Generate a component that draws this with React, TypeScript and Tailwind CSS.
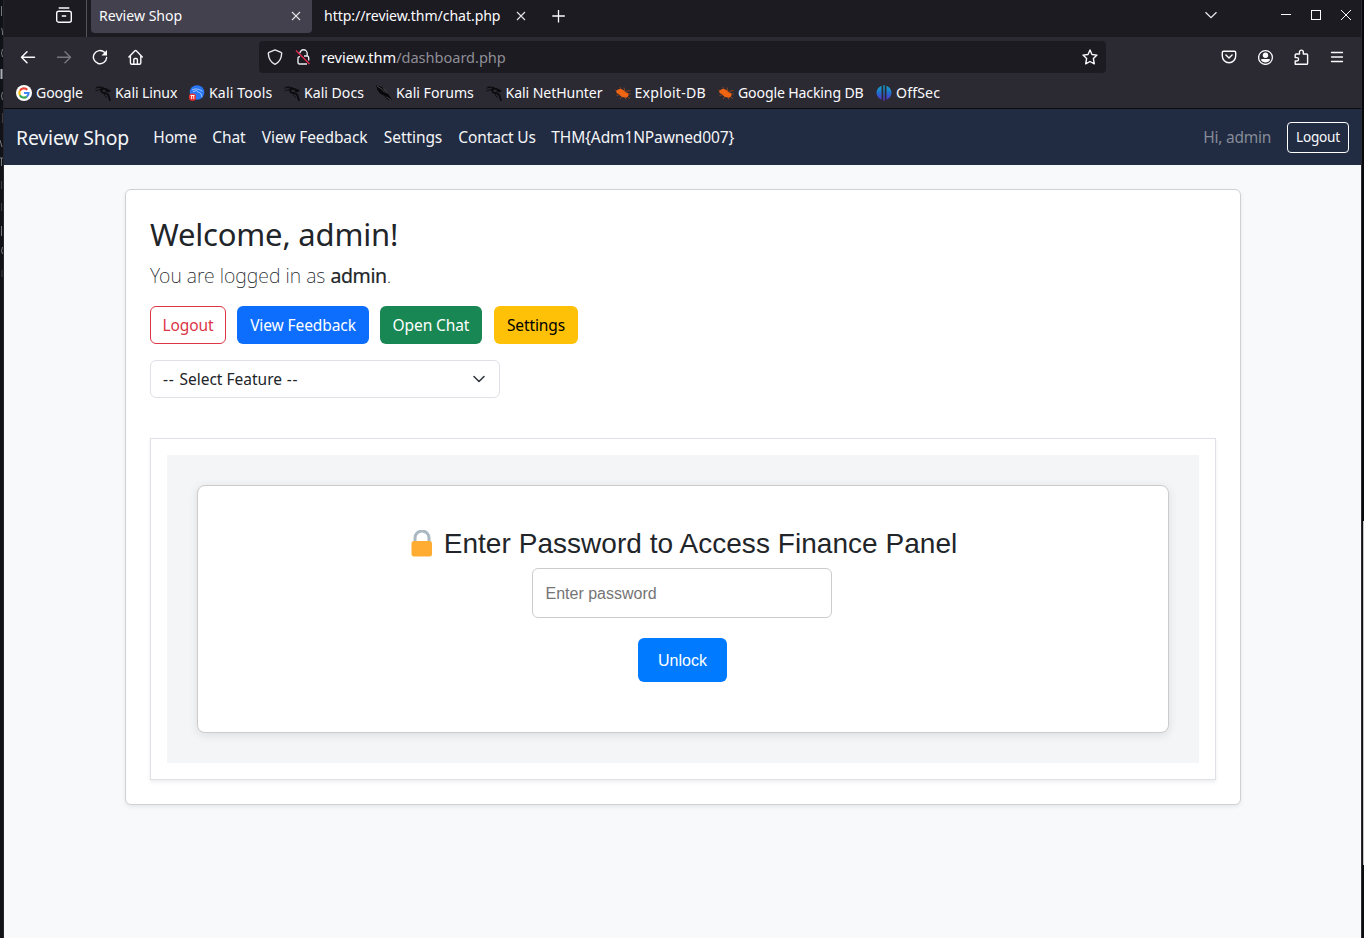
import type { ReactNode } from "react";

function KaliDragon({ color = "#0b0b0e" }: { color?: string }) {
  return (
    <svg className="h-4 w-4 shrink-0" viewBox="0 0 16 16" fill="none" stroke={color} strokeLinecap="round" strokeLinejoin="round">
      <path d="M.6 3.200 4.800 1.800l3.500.8M1 5.800l4-1.300 3.200.2M2 2l5.600 1.300 3.300.8" strokeWidth=".9" />
      <path d="M7.500 3.500C5.600 4.700 5.600 7.100 8.200 7.800c2.200.500 4.300.700 5.200 2.500.700 1.300.600 3.100 1.600 4.900" strokeWidth="1.800" />
      <path d="M8 3.500c2 .2 3.500.500 4.700 1.400l2 .7-1 .800-2.700-.400" strokeWidth="1.500" />
      <path d="M9.500 8.500c-.700 1.800.500 3.300 2.300 3.900" strokeWidth=".9" />
    </svg>
  );
}

function ForumsIcon() {
  return (
    <svg className="h-4 w-4 shrink-0" viewBox="0 0 16 16">
      <path d="M0 .2 6 2l4 4.200 2.400 3L16 15.300l-4.600-.6-3-4-4.400-2.200L1.500 5z" fill="#08080a" />
      <path d="m1 1 5 3.200 2.700 3.200M7.500 3.500l3.700 4.800M10.500 12l4.500 3.100" fill="none" stroke="#77777d" strokeWidth=".6" />
    </svg>
  );
}

function GoogleIcon() {
  return (
    <svg className="h-4 w-4 shrink-0" viewBox="0 0 16 16" fill="none" strokeWidth="2.100">
      <circle cx="8" cy="8" r="8" fill="#fff" />
      <path d="M11.300 4.800A4.600 4.600 0 0 0 3.900 5.800" stroke="#ea4335" />
      <path d="M3.900 5.800a4.700 4.700 0 0 0 0 4.400" stroke="#fbbc05" />
      <path d="M3.900 10.200a4.600 4.600 0 0 0 7 1.400" stroke="#34a853" />
      <path d="M8 8h4.600a4.600 4.600 0 0 1-1.700 3.600" stroke="#4285f4" />
    </svg>
  );
}

function ToolsIcon() {
  return (
    <svg className="h-4 w-4 shrink-0" viewBox="0 0 16 16">
      <circle cx="8" cy="7.500" r="7.300" fill="#2777f6" />
      <path d="M3 4.800 7 3.800l3.500.9 3 1.500M4 6.700l3.600-1.200c.2 1.900 3.300 1.600 4.400 3.200.6.900.5 2.200 1 3.500" fill="none" stroke="#b9d5ff" strokeWidth=".8" />
      <rect x="0" y="8.500" width="7" height="7.300" rx="3" fill="#e5322e" />
      <path d="M1.500 10.500h4M2.600 10.500v3.500M4.700 10.500v3.500" stroke="#fff" strokeWidth=".9" />
    </svg>
  );
}

function ExploitIcon() {
  return (
    <svg className="h-4 w-4 shrink-0" viewBox="0 0 16 16">
      <path d="m.3 5.200 3 .8M1.500 10.500l3.500-1M4.800 2l1.500 3M5 14l2.300-2.500M9 2.500l.8 3.500M10.500 6.500l5-1M11 10.500l4 3.200M11.500 8.700l4.300.3M9.500 11l1.500 3.500" stroke="#b34e1b" strokeWidth=".7" />
      <path d="m1.200 6 2-1.500c3.200-1.300 5.400.5 7.100 2.500l2.800 1.200.5 2.300-1.800 2c-3.300.4-6.300-.5-7.800-3.400L1.700 8.300z" fill="#f16512" />
    </svg>
  );
}

function OffSecIcon() {
  return (
    <svg className="h-4 w-4 shrink-0" viewBox="0 0 16 16">
      <defs>
        <linearGradient id="offsec" gradientUnits="userSpaceOnUse" x1="0" y1="0" x2="0" y2="16">
          <stop offset="0" stopColor="#14acc9" />
          <stop offset=".5" stopColor="#216dcb" />
          <stop offset="1" stopColor="#6027cd" />
        </linearGradient>
      </defs>
      <path d="M5.500.8v14C2.600 13.600.5 11.100.5 7.800S2.600 2 5.500.8zM7.300.3h1.400v15.400H7.300zM10.500.8c3 1.200 5 3.700 5 7s-2 5.800-5 7z" fill="url(#offsec)" />
    </svg>
  );
}

const bookmarks: { label: string; cls: string; icon: ReactNode }[] = [
  { label: "Google", cls: "w-[47px] tracking-[-0.1px]", icon: <GoogleIcon /> },
  { label: "Kali Linux", cls: "w-[62px] tracking-[-0.12px]", icon: <KaliDragon /> },
  { label: "Kali Tools", cls: "w-[63px] tracking-[0.150px]", icon: <ToolsIcon /> },
  { label: "Kali Docs", cls: "w-[60px]", icon: <KaliDragon /> },
  { label: "Kali Forums", cls: "w-[77.500px]", icon: <ForumsIcon /> },
  { label: "Kali NetHunter", cls: "w-[97px] tracking-[-0.08px]", icon: <KaliDragon /> },
  { label: "Exploit-DB", cls: "w-[71.500px] tracking-[0.26px]", icon: <ExploitIcon /> },
  { label: "Google Hacking DB", cls: "w-[126px] tracking-[-0.14px]", icon: <ExploitIcon /> },
  { label: "OffSec", cls: "w-[44px] tracking-[0.150px]", icon: <OffSecIcon /> },
];

const navLinks = [
  { label: "Home", cls: "w-[43px] tracking-[-0.150px]" },
  { label: "Chat", cls: "w-[33.500px] tracking-[-0.1px]" },
  { label: "View Feedback", cls: "w-[106px] tracking-[-0.1px]" },
  { label: "Settings", cls: "w-[58.500px] tracking-[-0.07px]" },
  { label: "Contact Us", cls: "w-[77px] tracking-[-0.13px]" },
  { label: "THM{Adm1NPawned007}", cls: "w-[184px] tracking-[-0.12px]" },
];

function CloseGlyph() {
  return (
    <svg className="h-4 w-4 shrink-0" viewBox="0 0 16 16" stroke="#e6e6ea" strokeWidth="1.100">
      <path d="m4 4 8 8M12 4l-8 8" />
    </svg>
  );
}

function TabBar() {
  return (
    <div className="flex h-[37px] bg-[#1c1b22] text-[14.100px] text-[#fbfbfe]">
      <div className="flex w-[83px] border-r border-[#55545b] pt-[7px] pl-[52px]">
        <svg className="h-4 w-4" viewBox="0 0 16 16" fill="none" stroke="#fbfbfe" strokeWidth="1.400" strokeLinecap="round">
          <path d="M3.200 1h9.600M6.300 9h3.400" />
          <rect x=".7" y="4.200" width="14.600" height="11" rx="2" />
        </svg>
      </div>
      <div className="ml-1 flex h-[33px] w-[221px] items-center justify-between rounded-b bg-[#42414d] pr-2 pl-2 pb-[2px]">
        <span className="whitespace-nowrap">Review Shop</span>
        <CloseGlyph />
      </div>
      <div className="flex h-[33px] items-center pb-[2px] pl-3">
        <span className="w-[177px] tracking-[-0.07px] whitespace-nowrap">http://review.thm/chat.php</span>
        <span className="ml-3">
          <CloseGlyph />
        </span>
        <svg className="ml-[22px] h-4 w-4" viewBox="0 0 16 16" stroke="#fbfbfe" strokeWidth="1.300">
          <path d="M7.500 2v12.500M1.300 8h12.500" />
        </svg>
      </div>
      <div className="ml-auto flex h-[30px] items-center pr-[9px]">
        <svg className="mr-[61px] h-4 w-4" viewBox="0 0 16 16" fill="none" stroke="#e8e8ec" strokeWidth="1.300">
          <path d="m2.500 5.200 5.500 5.500 5.500-5.500" />
        </svg>
        <svg className="h-4 w-[72px]" viewBox="0 0 72 16" fill="none" stroke="#fbfbfe" shapeRendering="crispEdges">
          <path d="M1 7.500h10" />
          <path d="M31.500 3.500h9v9h-9z" />
          <path d="m61 3 10 10M71 3 61 13" shapeRendering="auto" />
        </svg>
      </div>
    </div>
  );
}

function ToolBar() {
  return (
    <div className="flex h-10 items-center bg-[#2b2a33]">
      <svg className="ml-4 h-4 w-4" viewBox="0 0 16 16" fill="none" stroke="#fbfbfe" strokeWidth="1.500" strokeLinecap="round" strokeLinejoin="round">
        <path d="M14.500 8.300h-13M7 2.800 1.500 8.300 7 13.800" />
      </svg>
      <svg className="ml-5 h-4 w-4" viewBox="0 0 16 16" fill="none" stroke="#77767d" strokeWidth="1.500" strokeLinecap="round" strokeLinejoin="round">
        <path d="M1.500 8.300h13M9 2.800l5.500 5.500L9 13.800" />
      </svg>
      <svg className="ml-5 h-4 w-4" viewBox="0 0 16 16" fill="none" stroke="#fbfbfe" strokeWidth="1.400" strokeLinecap="round">
        <path d="M12.500 3.300A6.600 6.600 0 1 0 14.600 8.500" />
        <path d="M15 1v5.500H9.500z" fill="#fbfbfe" stroke="none" />
      </svg>
      <svg className="ml-5 h-4 w-4" viewBox="0 0 16 16" fill="none" stroke="#fbfbfe" strokeWidth="1.400" strokeLinecap="round" strokeLinejoin="round">
        <path d="m.9 8 5.800-6q.9-.9 1.800 0l5.800 6M2.400 7v6.700q0 1.500 1.500 1.500h7.400q1.500 0 1.500-1.500V7M5.800 15v-4.200q0-1.300 1.100-1.300h1.400q1.100 0 1.100 1.300V15" />
      </svg>
      <div className="ml-[115px] flex h-8 w-[847px] items-center rounded bg-[#1c1b22] pr-2 pl-2">
        <svg className="h-4 w-4" viewBox="0 0 16 16" fill="none" stroke="#e9e9ed" strokeWidth="1.400" strokeLinejoin="round">
          <path d="M8 .9 14 3.300c.5.200.7.600.7 1C14.500 9.500 12 13.500 8 15.300 4 13.500 1.500 9.500 1.300 4.300c0-.4.2-.8.700-1z" />
        </svg>
        <svg className="ml-3 h-4 w-4" viewBox="0 0 16 16" fill="none" stroke="#e9e9ed" strokeWidth="1.400">
          <path d="M4.800 4.500a3.700 3.700 0 0 1 7.400 0V7M9 7h3q1.700 0 1.700 1.700v2.800M5 7.700q-2-.2-2 1.800v4q0 1.500 1.500 1.500H12" />
          <path d="m1 1.500 13.500 13.500" stroke="#e22850" />
        </svg>
        <div className="ml-2.5 pt-0.5 text-[14.600px] tracking-[-0.04px] whitespace-nowrap text-[#fbfbfe]">
          review.thm<span className="text-[#8f8e96]">/dashboard.php</span>
        </div>
        <svg className="ml-auto h-4 w-4" viewBox="0 0 16 16" fill="none" stroke="#fbfbfe" strokeWidth="1.400" strokeLinejoin="round">
          <path d="m8 1 2 4.500 5 .6-3.600 3.500.9 5.200L8 12.500l-4.300 2.300.9-5.200L1 6.100l5-.6z" />
        </svg>
      </div>
      <div className="ml-[115px] flex gap-5">
        <svg className="h-4 w-4" viewBox="0 0 16 16" fill="none" stroke="#fbfbfe" strokeWidth="1.400" strokeLinecap="round" strokeLinejoin="round">
          <path d="M1.300 3.500q0-1.300 1.300-1.300h10.800q1.300 0 1.300 1.300V7a6.700 6.700 0 0 1-13.400 0z" />
          <path d="M4.900 6 8 8.900 11.100 6" />
        </svg>
        <svg className="ml-px h-4 w-4" viewBox="0 0 16 16" fill="#fbfbfe">
          <circle cx="7.500" cy="8.500" r="6.900" fill="none" stroke="#fbfbfe" strokeWidth="1.300" />
          <circle cx="7.500" cy="6.300" r="2.700" />
          <path d="M4 10h7q1 0 1 1c-1.200 1.800-2.500 2.400-4.500 2.400S4.200 12.800 3 11q0-1 1-1z" />
        </svg>
        <svg className="-ml-px h-4 w-4" viewBox="0 0 16 16" fill="none" stroke="#fbfbfe" strokeWidth="1.400" strokeLinejoin="round">
          <path d="M2.200 7V6q0-1 1-1h3.300V3a1.900 1.900 0 0 1 3.800 0v2h3.300q1 0 1 1v8.500q0 .8-1 .8H2.200V12h1.700a1.700 1.700 0 0 0 0-3.400H2.200z" />
        </svg>
        <svg className="h-4 w-4" viewBox="0 0 16 16" stroke="#fbfbfe" strokeWidth="1.300" strokeLinecap="round">
          <path d="M2.500 3.500h11M2.500 8h11M2.500 12.500h11" />
        </svg>
      </div>
    </div>
  );
}

function ReviewPage() {
  return (
    <div className="flex-1 bg-[#f8f9fa] text-[15.500px] text-[#212529]">
      <nav className="flex h-14 items-center bg-[#212b42] pr-3 pl-3 whitespace-nowrap text-[#f4f5f7]">
        <span className="w-[137px] pt-0.5 text-[19.400px] tracking-[-0.14px]">Review Shop</span>
        <div className="flex gap-4 pt-px pl-[0.3px]">
          {navLinks.map((l) => (
            <a key={l.label} className={l.cls}>
              {l.label}
            </a>
          ))}
        </div>
        <span className="ml-auto pt-px tracking-[-0.25px] text-[#868c98]">Hi, admin</span>
        <button className="ml-4 h-[31px] w-[62px] rounded border border-white pt-px text-[13.600px] tracking-[-0.2px] text-[#f8f9fa]">
          Logout
        </button>
      </nav>
      <main className="mt-6 mr-[120px] ml-[121px] h-[616px] rounded-md border border-[#cfd1d3] bg-white px-6 shadow-[0_2px_4px_rgba(0,0,0,0.075)]">
        <h2 className="mt-[25px] text-[31px] leading-[38px] font-normal tracking-[-0.2px]">Welcome, admin!</h2>
        <p className="mt-2 text-[19.500px] leading-[30px] font-extralight">
          You are logged in as{" "}
          <strong className="font-normal tracking-[-0.4px] [-webkit-text-stroke:0.2px_#212529]">admin</strong>.
        </p>
        <div className="mt-[15px] flex h-[38px] gap-[11px] tracking-[-0.1px] whitespace-nowrap">
          <button className="w-[76px] rounded-md border border-[#dc3545] pt-0.5 text-[#dc3545]">Logout</button>
          <button className="w-[132px] rounded-md bg-[#0d6efd] pt-0.5 text-white">View Feedback</button>
          <button className="w-[102px] rounded-md bg-[#198754] pt-0.5 text-white">Open Chat</button>
          <button className="ml-px w-[84px] rounded-md bg-[#ffc107] pt-0.5 text-black">Settings</button>
        </div>
        <div className="mt-4 flex h-[38px] w-[350px] items-center justify-between rounded-md border border-[#dee2e6] pr-3 pl-3">
          <span className="pt-0.5">
            <span className="tracking-[0.8px]">-- </span>Select Feature<span className="tracking-[0.8px]"> --</span>
          </span>
          <svg className="h-4 w-4" viewBox="0 0 16 16" fill="none" stroke="#343a40" strokeWidth="1.600" strokeLinecap="round" strokeLinejoin="round">
            <path d="m3 5.500 5 5 5-5" />
          </svg>
        </div>
        <section className="mt-10 h-[342px] border border-[#dee2e6] p-4 shadow-[0_2px_4px_rgba(0,0,0,0.075)]">
          <div className="h-[308px] bg-[#f4f5f7] p-[30px] font-['Liberation_Sans',sans-serif]">
            <div className="flex h-[248px] flex-col items-center rounded-lg border border-[#ccc] bg-white shadow-[0_2px_10px_rgba(0,0,0,0.1)]">
              <h3 className="mt-[41px] flex h-[34px] items-center pl-0.5 text-[28px] leading-[34px] tracking-[0.040px]">
                <svg className="mr-[11px] mb-px h-[27px] w-[22px]" viewBox="0 0 22 27">
                  <path d="M4 14V8a7 7 0 0 1 14 0v6" fill="none" stroke="#aab8c2" strokeWidth="3" />
                  <rect x=".5" y="11" width="20.500" height="15.500" rx="2.500" fill="#ffac33" />
                </svg>
                Enter Password to Access Finance Panel
              </h3>
              <input
                className="mt-[7px] mr-[2px] h-[50px] w-[300px] rounded-md border border-[#ccc] px-[12.500px] pt-0.5 text-base placeholder:text-[#757575]"
                type="password"
                placeholder="Enter password"
              />
              <button className="mt-5 mr-px h-11 w-[89px] rounded-md bg-[#007bff] pt-0.5 text-base text-white">Unlock</button>
            </div>
          </div>
        </section>
      </main>
    </div>
  );
}

export default function App() {
  return (
    <div className="flex h-[938px] w-[1364px] overflow-hidden bg-[#101116] font-['Noto_Sans',sans-serif]">
      <div className="w-1 shrink-0 border-r border-[#24242b] bg-[#111217]">
        <svg className="h-[300px] w-[3px]" viewBox="0 0 3 300" fill="none" stroke="#777a80">
          <path d="M1.500 6v10M1 28q1.500 0 1.500 7M2.500 49q-2 4 0 8M2.500 92q-2 4 0 8M0 140l2 7M0 158h3M1.500 158v8M1.500 226v10M2.500 247q-2 4 0 7" />
          <path d="M1.500 69v10" stroke="#aab0b8" strokeWidth="2" />
          <path d="M2.500 113v10M1.500 181v8M1.500 203v8M2 270v7" stroke="#3b3d43" />
        </svg>
      </div>
      <div className="flex w-[1357px] shrink-0 flex-col">
        <TabBar />
        <ToolBar />
        <div className="flex h-8 gap-3 border-b border-[#0c0c0d] bg-[#2b2a33] pl-3 text-[14.100px] whitespace-nowrap text-[#fbfbfe]">
          {bookmarks.map((b) => (
            <div key={b.label} className="flex items-center gap-1">
              {b.icon}
              <span className={b.cls}>{b.label}</span>
            </div>
          ))}
        </div>
        <ReviewPage />
      </div>
      <div className="flex w-[3px] shrink-0 flex-col border-l border-[#2b2a30]">
        <div className="h-[521px] bg-[#08090d]" />
        <div className="ml-px h-[344px] bg-[#c4c4c4]" />
        <div className="flex-1 bg-[#0b0c12]" />
      </div>
    </div>
  );
}
